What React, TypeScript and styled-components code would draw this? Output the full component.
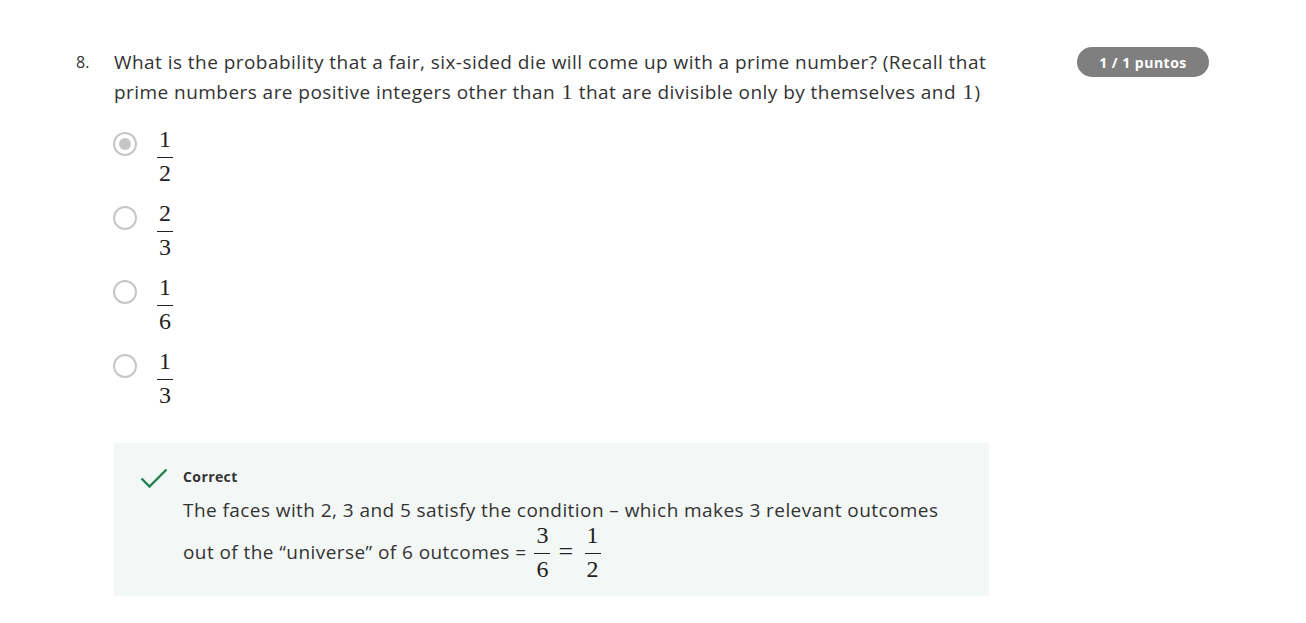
import React from "react";
import styled, { createGlobalStyle } from "styled-components";

const Global = createGlobalStyle`
  html, body { margin: 0; padding: 0; background: #fff; }
  body { font-family: "Open Sans", "Liberation Sans", sans-serif; color: #333; }
`;

const SERIF = `"Liberation Serif", "DejaVu Serif", "Times New Roman", serif`;

const Page = styled.div`
  width: 1306px;
  min-height: 623px;
  box-sizing: border-box;
  padding: 47px 0 0 76px;
  display: flex;
`;

const Number = styled.div`
  width: 38px;
  font-size: 16px;
  line-height: 30px;
  color: #333;
`;

const Body = styled.div`
  width: 876px;
  display: flex;
  flex-direction: column;
`;

const Prompt = styled.p`
  margin: 0;
  font-size: 19px;
  letter-spacing: 0.45px;
  line-height: 30px;
  color: #333;
  width: 884px;
`;

const MathNum = styled.span`
  font-family: ${SERIF};
  font-size: 22px;
  line-height: 1;
  letter-spacing: 0;
  padding: 0 1px;
`;

const Options = styled.div`
  display: flex;
  flex-direction: column;
  gap: 16px;
  margin-top: 20px;
`;

const OptionRow = styled.label`
  display: flex;
  align-items: flex-start;
  gap: 20px;
`;

const Radio = styled.span<{ $checked?: boolean }>`
  width: 24px;
  height: 24px;
  box-sizing: border-box;
  border-radius: 50%;
  border: 2px solid #c6c6c6;
  display: flex;
  align-items: center;
  justify-content: center;
  margin: 5px 0 0 -1px;
  &::after {
    content: "";
    width: 12px;
    height: 12px;
    border-radius: 50%;
    background: ${(p) => (p.$checked ? "#c6c6c6" : "transparent")};
  }
`;

const Frac = styled.span`
  display: inline-flex;
  flex-direction: column;
  align-items: center;
  font-family: ${SERIF};
  font-size: 24px;
  line-height: 1;
  color: #222;
  letter-spacing: 0;
`;

const FracPart = styled.span`
  padding: 0 2px;
`;

const Bar = styled.span`
  align-self: stretch;
  height: 1px;
  background: #222;
  margin: 6px 0 3px;
`;

const Feedback = styled.div`
  margin-top: 36px;
  width: 875px;
  height: 153px;
  box-sizing: border-box;
  background: #f3f8f6;
  padding: 24px 40px 0 26px;
  display: flex;
  gap: 15px;
`;

const CheckIcon = styled.svg`
  flex: none;
`;

const FeedbackText = styled.div`
  display: flex;
  flex-direction: column;
`;

const Title = styled.div`
  font-size: 14px;
  letter-spacing: 0.4px;
  font-weight: 700;
  line-height: 20px;
  color: #333;
`;

const Explain = styled.p`
  margin: 10px 0 0;
  font-size: 19px;
  letter-spacing: 0.43px;
  line-height: 26px;
  color: #333;
`;

const EqLine = styled.div`
  display: flex;
  align-items: center;
  font-size: 19px;
  letter-spacing: 0.43px;
  color: #333;
`;

const EqText = styled.span`
  margin-right: 8px;
`;

const Equals = styled.span`
  font-family: ${SERIF};
  font-size: 26px;
  line-height: 1;
  margin: 0 11px 0 8px;
  color: #222;
`;

const Side = styled.div`
  flex: 1;
  display: flex;
  justify-content: flex-end;
  padding-right: 97px;
`;

const Badge = styled.div`
  height: 30px;
  width: 132px;
  border-radius: 15px;
  background: #7f7f7f;
  color: #fff;
  font-size: 14px;
  letter-spacing: 0.5px;
  font-weight: 700;
  display: flex;
  align-items: center;
  justify-content: center;
`;

const Fraction = ({ n, d }: { n: string; d: string }) => (
  <Frac>
    <FracPart>{n}</FracPart>
    <Bar />
    <FracPart>{d}</FracPart>
  </Frac>
);

const options = [
  { n: "1", d: "2", checked: true },
  { n: "2", d: "3" },
  { n: "1", d: "6" },
  { n: "1", d: "3" },
];

export default function App() {
  return (
    <>
      <Global />
      <Page>
        <Number>8.</Number>
        <Body>
          <Prompt>
            What is the probability that a fair, six-sided die will come up with a prime number? (Recall that
            prime numbers are positive integers other than <MathNum>1</MathNum> that are divisible only by
            themselves and <MathNum>1</MathNum>)
          </Prompt>
          <Options>
            {options.map((o, i) => (
              <OptionRow key={i}>
                <Radio $checked={o.checked} />
                <Fraction n={o.n} d={o.d} />
              </OptionRow>
            ))}
          </Options>
          <Feedback>
            <CheckIcon width="28" height="22" viewBox="0 0 28 22">
              <path d="M1.5 11.5 L9.5 19.5 L26.5 2.5" fill="none" stroke="#1f8354" strokeWidth="2.4" />
            </CheckIcon>
            <FeedbackText>
              <Title>Correct</Title>
              <Explain>
                The faces with 2, 3 and 5 satisfy the condition – which makes 3 relevant outcomes
              </Explain>
              <EqLine>
                <EqText>out of the “universe” of 6 outcomes =</EqText>
                <Fraction n="3" d="6" />
                <Equals>=</Equals>
                <Fraction n="1" d="2" />
              </EqLine>
            </FeedbackText>
          </Feedback>
        </Body>
        <Side>
          <Badge>1 / 1 puntos</Badge>
        </Side>
      </Page>
    </>
  );
}
